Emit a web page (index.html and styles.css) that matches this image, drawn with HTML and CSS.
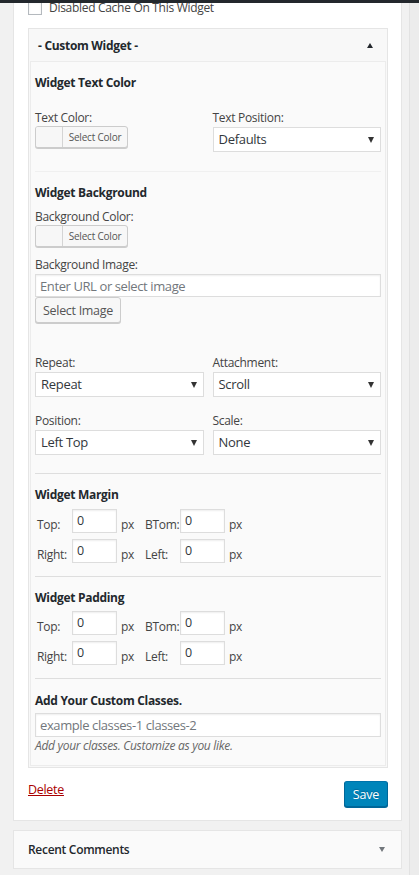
FILE: index.html
```
<!DOCTYPE html>
<html lang="en">
<head>
<meta charset="utf-8">
<title>Custom Widget</title>
<link rel="stylesheet" href="styles.css">
</head>
<body>
<div class="adminbar"></div>
<div class="page">
  <div class="main">
    <div class="widget">
      <label class="check-row"><span class="checkbox"></span><span>Disabled Cache On This Widget</span></label>
      <div class="cw">
        <div class="cw-head"><span>- Custom Widget -</span><span class="tri-up"></span></div>
        <div class="cw-body">
          <h4 class="sec-title">Widget Text Color</h4>
          <div class="two-col row-a">
            <div class="field">
              <div class="lbl">Text Color:</div>
              <button class="color-btn" type="button"><span class="swatch"></span><span class="color-txt">Select Color</span></button>
            </div>
            <div class="field">
              <div class="lbl">Text Position:</div>
              <div class="select">Defaults</div>
            </div>
          </div>
          <div class="sep faint sep-a"></div>
          <h4 class="sec-title mt12">Widget Background</h4>
          <div class="lbl mt7">Background Color:</div>
          <button class="color-btn" type="button"><span class="swatch"></span><span class="color-txt">Select Color</span></button>
          <div class="lbl mt10">Background Image:</div>
          <input class="text-input url-input" type="text" placeholder="Enter URL or select image">
          <button class="wp-btn" type="button">Select Image</button>
          <div class="two-col row-b">
            <div class="field">
              <div class="lbl">Repeat:</div>
              <div class="select">Repeat</div>
            </div>
            <div class="field">
              <div class="lbl">Attachment:</div>
              <div class="select">Scroll</div>
            </div>
          </div>
          <div class="two-col row-c">
            <div class="field">
              <div class="lbl">Position:</div>
              <div class="select">Left Top</div>
            </div>
            <div class="field">
              <div class="lbl">Scale:</div>
              <div class="select">None</div>
            </div>
          </div>
          <div class="sep sep-b"></div>
          <h4 class="sec-title mt12">Widget Margin</h4>
          <div class="box-grid mt5">
            <span class="bl first">Top:</span><input class="small-input" type="text" value="0"><span class="px">px</span>
            <span class="bl">BTom:</span><input class="small-input" type="text" value="0"><span class="px">px</span>
            <span class="bl first">Right:</span><input class="small-input" type="text" value="0"><span class="px">px</span>
            <span class="bl">Left:</span><input class="small-input" type="text" value="0"><span class="px">px</span>
          </div>
          <div class="sep sep-c"></div>
          <h4 class="sec-title mt12">Widget Padding</h4>
          <div class="box-grid mt4">
            <span class="bl first">Top:</span><input class="small-input" type="text" value="0"><span class="px">px</span>
            <span class="bl">BTom:</span><input class="small-input" type="text" value="0"><span class="px">px</span>
            <span class="bl first">Right:</span><input class="small-input" type="text" value="0"><span class="px">px</span>
            <span class="bl">Left:</span><input class="small-input" type="text" value="0"><span class="px">px</span>
          </div>
          <div class="sep sep-c"></div>
          <h4 class="sec-title mt13">Add Your Custom Classes.</h4>
          <input class="text-input classes-input" type="text" placeholder="example classes-1 classes-2">
          <div class="help">Add your classes. Customize as you like.</div>
        </div>
      </div>
      <div class="actions">
        <a class="delete" href="#">Delete</a>
        <button class="save" type="button">Save</button>
      </div>
    </div>
    <div class="widget-collapsed">
      <span>Recent Comments</span>
      <span class="tri-down"></span>
    </div>
  </div>
  <div class="scrollbar"></div>
</div>
</body>
</html>
```
FILE: styles.css
```
html, body {
  margin: 0;
  padding: 0;
}
body {
  background: #f1f1f1;
  font-family: "Open Sans", "Noto Sans", sans-serif;
  font-size: 12px;
  letter-spacing: -0.3px;
  color: #444;
  overflow: hidden;
}
* { box-sizing: border-box; }

.adminbar {
  position: fixed;
  top: 0;
  left: 0;
  right: 0;
  height: 3px;
  background: #23282d;
  z-index: 10;
}
.page {
  display: flex;
  height: 875px;
}
.main {
  width: 409px;
  flex: none;
  padding: 0 7px 0 13px;
}
.scrollbar {
  flex: 1;
  background: #ececec;
  border-left: 1px solid #e2e2e2;
}

.widget {
  background: #fff;
  border: 1px solid #e5e5e5;
  margin-top: -11px;
  padding: 10px 13px 13px 14px;
}
.check-row {
  display: flex;
  align-items: center;
  gap: 7px;
  height: 16px;
  line-height: 16px;
  color: #444;
}
.checkbox {
  width: 14px;
  height: 14px;
  border: 1px solid #b4b9be;
  background: #fff;
  box-shadow: inset 0 1px 2px rgba(0,0,0,.1);
}

.cw {
  margin-top: 12px;
  border: 1px solid #e5e5e5;
  background: #f8f8f8;
}
.cw-head {
  height: 32px;
  display: flex;
  align-items: center;
  justify-content: space-between;
  padding: 0 14px 0 9px;
  font-weight: 700;
  font-size: 12px;
  color: #23282d;
}
.tri-up {
  width: 0;
  height: 0;
  border-left: 3px solid transparent;
  border-right: 3px solid transparent;
  border-bottom: 5px solid #23282d;
}
.cw-body {
  margin: 0 1px 1px;
  border: 1px solid #ececec;
  background: #fafafa;
  padding: 12px 4px 11px;
}
.sec-title {
  margin: 0;
  font-size: 12px;
  font-weight: 700;
  line-height: 18px;
  color: #23282d;
}
.mt4 { margin-top: 4px; }
.mt5 { margin-top: 5px; }
.mt7 { margin-top: 7px; }
.mt10 { margin-top: 10px; }
.mt12 { margin-top: 12px; }
.mt13 { margin-top: 13px; }

.lbl {
  line-height: 16px;
  color: #444;
}
.two-col {
  display: grid;
  grid-template-columns: 1fr 1fr;
  column-gap: 9px;
}
.row-a { margin-top: 18px; }
.row-b { margin-top: 32px; }
.row-c { margin-top: 16px; }

.color-btn {
  display: flex;
  width: 93px;
  height: 22px;
  padding: 0;
  border: 1px solid #ccc;
  border-radius: 3px;
  background: #f7f7f7;
  box-shadow: 0 1px 0 #ccc;
  font-family: inherit;
  cursor: pointer;
  overflow: hidden;
}
.swatch {
  width: 27px;
  height: 100%;
  border-right: 1px solid #d4d4d4;
  background: #f7f7f7;
}
.color-txt {
  flex: 1;
  font-size: 10px;
  letter-spacing: -0.2px;
  line-height: 20px;
  color: #555;
  text-align: center;
}

.select {
  position: relative;
  height: 25px;
  margin-top: 1px;
  border: 1px solid #ddd;
  background: #fff;
  padding-left: 5px;
  line-height: 23px;
  font-size: 13px;
  color: #32373c;
}
.select::after {
  content: "";
  position: absolute;
  right: 6px;
  top: 9px;
  border-left: 3px solid transparent;
  border-right: 3px solid transparent;
  border-top: 6px solid #333;
}

.sep { height: 1px; background: #dedede; }
.sep.faint { background: #f0f0f0; }
.sep-a { margin-top: 19px; }
.sep-b { margin-top: 18px; }
.sep-c { margin-top: 13px; }

.text-input {
  display: block;
  width: 100%;
  border: 1px solid #ddd;
  background: #fff;
  box-shadow: inset 0 1px 2px rgba(0,0,0,.07);
  padding: 0 4px;
  font-family: inherit;
  font-size: 13px;
  letter-spacing: -0.4px;
  color: #32373c;
  margin: 0;
  outline: none;
}
.text-input::placeholder { color: #72777c; }
.url-input {
  height: 23px;
  margin-top: 1px;
}
.classes-input {
  height: 24px;
  margin-top: 3px;
}
.wp-btn {
  display: block;
  width: 86px;
  height: 26px;
  padding: 0;
  border: 1px solid #ccc;
  border-radius: 3px;
  background: #f7f7f7;
  box-shadow: 0 1px 0 #ccc;
  font-family: inherit;
  font-size: 12.5px;
  letter-spacing: -0.3px;
  color: #555;
}

.box-grid {
  display: grid;
  grid-template-columns: 37px 45px 28px 35px 45px 1fr;
  row-gap: 6px;
}
.bl {
  padding-top: 8px;
  line-height: 16px;
  color: #444;
}
.bl.first { padding-left: 2px; }
.px {
  padding: 8px 0 0 4px;
  line-height: 16px;
  color: #444;
}
.small-input {
  width: 45px;
  height: 24px;
  margin: 0;
  border: 1px solid #ddd;
  background: #fff;
  box-shadow: inset 0 1px 2px rgba(0,0,0,.07);
  padding: 0 4px 2px;
  font-family: inherit;
  font-size: 12.5px;
  color: #32373c;
  outline: none;
}
.help {
  margin-top: 1px;
  line-height: 16px;
  font-style: italic;
  color: #666;
}

.actions {
  display: flex;
  justify-content: space-between;
  align-items: flex-start;
  margin-top: 13px;
}
.delete {
  line-height: 18px;
  color: #a00;
  text-decoration: underline;
  font-size: 12.5px;
}
.save {
  width: 44px;
  height: 26px;
  padding: 0;
  background: #0085ba;
  border: 1px solid;
  border-color: #0073aa #006799 #006799;
  border-radius: 3px;
  box-shadow: 0 1px 0 #006799;
  color: #fff;
  font-family: inherit;
  font-size: 12.5px;
  letter-spacing: -0.2px;
  text-shadow: 0 -1px 1px #006799;
}

.widget-collapsed {
  margin-top: 9px;
  height: 39px;
  border: 1px solid #e5e5e5;
  background: #fafafa;
  display: flex;
  align-items: center;
  justify-content: space-between;
  padding: 0 16px 0 14px;
  font-weight: 600;
  font-size: 12px;
  color: #23282d;
}
.tri-down {
  width: 0;
  height: 0;
  border-left: 3px solid transparent;
  border-right: 3px solid transparent;
  border-top: 5px solid #72777c;
}
```
